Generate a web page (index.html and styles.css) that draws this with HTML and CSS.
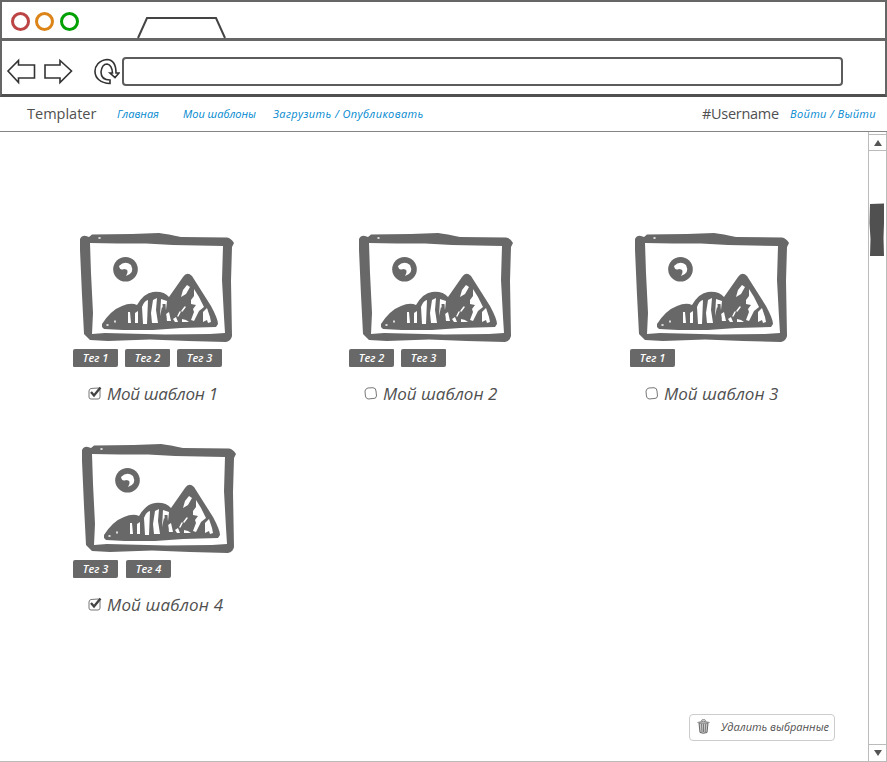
FILE: index.html
```
<!DOCTYPE html>
<html lang="ru">
<head>
<meta charset="utf-8">
<title>Templater</title>
<link rel="stylesheet" href="styles.css">
</head>
<body>
<svg class="defs" width="0" height="0" aria-hidden="true">
  <symbol id="picture" viewBox="0 0 155 110">
    <path fill="#686868" fill-rule="evenodd" d="M0 6Q2 2 6 3L9 4 12 1.500 52 1 79 0Q88 1 101 4L147 4.500Q151 5 154 10L152 14 151 48 152 103Q151 108 146 109L108 108 70 106.500 28 108 10 107 4 101 2 62 0 17ZM10 10 11 40 13 80 12 101 25 100 85 101.500 130 101 145 100 144 84 142 47 143 13 93 12 66 10.500 38 10.500Z"/>
    <circle cx="45.500" cy="36.300" r="12.300" fill="#686868"/>
    <path d="M39 33Q45 27 51 32 55 40 46 43 50 36 44 36 40 38 39 33Z" fill="#fff"/>
    <path fill="#686868" d="M22 94 22 91Q31 77 42 73 51 69 57 72 64 60 73 59 84 58 89 64L103 44Q107 38 112 43L131 73Q138 86 138 91L136 94 101 95 73 97 43 97 24 96Z"/>
    <path fill="#fff" d="M103 57 107 52 110 54 106 61 101 64ZM114 56 119 64 124 74 119 78 114 88 111 87 114 79 113 76 116 72 111 71 111 67 114 63ZM123 79 127 75 130 84 131 89 128 90 127 87 123 89ZM62 74Q64 68 68 67L67 91 63 91ZM73 67 77 65 76 77 78 90 72 90 71 80ZM81 66 87 68 86 77 82 74 80 83ZM86 81 89 79 91 88 87 88ZM93 86 96 84 98 89 95 89ZM102 86 106 87 109 89 102 89ZM48 79 50 79 51 90 48 90ZM55 80 58 78 58 90 55 90Z"/>
    <g fill="none" stroke="#fff" stroke-linecap="round">
      <path stroke-width="1.500" d="M100 79 98 83M105 74 102 78M27 92H28M35 88V89M19 5H20"/>
    </g>
    <path d="M84 71 85 86M103 82 107 76" stroke="#686868" stroke-width="3"/>
  </symbol>
  <symbol id="checked" viewBox="0 0 14 14">
    <path d="M3 2.500 10 2Q12 2 12 4V11Q12 13 10 13H3Q1 13 1 11V5Q1 3 3 2.500Z" fill="none" stroke="#777"/>
    <path d="M3 6 6 9.500 12.500 1.500" fill="none" stroke="#444" stroke-width="2.400"/>
  </symbol>
  <symbol id="unchecked" viewBox="0 0 14 14">
    <path d="M4 2 9 1.700Q12 2 12 5L12.500 10Q12 13 9 12.500L4 13Q1 12 1.300 9L1 5Q2 2 4 2Z" fill="none" stroke="#777"/>
  </symbol>
</svg>

<header class="browser">
  <div class="tabs">
    <i class="light red"></i><i class="light orange"></i><i class="light green"></i>
    <svg class="tab" width="90" height="23" viewBox="0 0 90 23"><path d="M1 22 10 2H79L88 22" fill="#fff" stroke="#444" stroke-width="2"/></svg>
  </div>
  <div class="toolbar">
    <svg width="120" height="32" viewBox="0 0 120 32" fill="#fff" stroke="#333" stroke-width="1.600">
      <path d="M8 15 18.500 4.500V9H34.500V22H18.500V26.500Z"/>
      <path d="M45 9H60V4.500L71.500 15 60 26.500V22H45Z"/>
      <path d="M110 27.500V24Q101 24 101 16 102 8 107 8 112 9 112.500 17H110L115 21.500 119 17H116Q116 4 107 3.500C91 5 90 27 110 27.500Z"/>
    </svg>
    <div class="address"></div>
  </div>
</header>

<nav class="nav">
  <span class="brand">Templater</span>
  <a class="home">Главная</a>
  <a class="mine">Мои шаблоны</a>
  <a class="upload">Загрузить / Опубликовать</a>
  <span class="user">#Username</span>
  <a class="login">Войти / Выйти</a>
</nav>

<div class="page">
  <main class="content">
    <section class="grid">
      <article class="card">
        <svg class="thumb"><use href="#picture"/></svg>
        <div class="tags"><span class="tag">Тег 1</span><span class="tag">Тег 2</span><span class="tag">Тег 3</span></div>
        <div class="name"><svg class="check"><use href="#checked"/></svg><span>Мой шаблон 1</span></div>
      </article>
      <article class="card second">
        <svg class="thumb"><use href="#picture"/></svg>
        <div class="tags"><span class="tag">Тег 2</span><span class="tag">Тег 3</span></div>
        <div class="name"><svg class="check"><use href="#unchecked"/></svg><span>Мой шаблон 2</span></div>
      </article>
      <article class="card third">
        <svg class="thumb"><use href="#picture"/></svg>
        <div class="tags"><span class="tag">Тег 1</span></div>
        <div class="name"><svg class="check"><use href="#unchecked"/></svg><span>Мой шаблон 3</span></div>
      </article>
      <article class="card fourth">
        <svg class="thumb"><use href="#picture"/></svg>
        <div class="tags"><span class="tag">Тег 3</span><span class="tag">Тег 4</span></div>
        <div class="name"><svg class="check"><use href="#checked"/></svg><span>Мой шаблон 4</span></div>
      </article>
    </section>
    <button class="delete">
      <svg width="13" height="15" viewBox="0 0 13 15"><path d="M2 4 3 13.500Q6 15 10 13.500L11 4Z" fill="#ccc" stroke="#666"/><path d="M.5 3.500Q6 1 12.500 3.500M4.500 2 5 .8H8L8.500 2M4.500 5 5 13M6.500 5V13M8.700 5 8.200 13" fill="none" stroke="#666" stroke-width=".8"/></svg>
      <span>Удалить выбранные</span>
    </button>
  </main>
  <aside class="scrollbar">
    <div class="arrow up"><svg width="10" height="6"><path d="M1 6 5 0 9 6Z" fill="#555"/></svg></div>
    <svg class="thumb-bar" width="16" height="54" viewBox="0 0 16 54"><path d="M1 1 15 .5 15 20 14.500 35 15 53 1 53 1.500 36 .5 20Z" fill="#505050"/></svg>
    <div class="arrow down"><svg width="10" height="6"><path d="M1 0H9L5 6Z" fill="#555"/></svg></div>
  </aside>
</div>
</body>
</html>
```
FILE: styles.css
```
* { box-sizing: border-box; }
body {
  margin: 0;
  width: 887px;
  height: 762px;
  overflow: hidden;
  display: flex;
  flex-direction: column;
  background: #fff;
  color: #505050;
  font-family: "Open Sans", "Noto Sans", sans-serif;
}
svg { display: block; flex: none; }
.defs { position: absolute; }

.browser {
  height: 97px;
  flex: none;
  border: solid #666;
  border-width: 2px 2px 3px;
  border-bottom-color: #505050;
}
.tabs {
  height: 39px;
  display: flex;
  align-items: flex-start;
  padding-left: 9px;
  gap: 5.400px;
  border-bottom: 3px solid #666;
}
.light { width: 19px; height: 19px; margin-top: 10px; border: 3px solid; border-radius: 50%; }
.red { border-color: #bd4444; }
.orange { border-color: #dc8418; }
.green { border-color: #00a000; }
.tab { margin: 14px 0 0 53px; }
.toolbar { display: flex; height: 53px; align-items: center; padding-top: 8px; }
.toolbar > svg { margin-left: -2px; }
.address { width: 721px; height: 29px; margin-left: 2px; border: 2px solid #5c5c5c; border-radius: 4px; }

.nav {
  height: 35px;
  flex: none;
  display: flex;
  align-items: center;
  padding-left: 27px;
  border-bottom: 1px solid #858585;
  white-space: nowrap;
  line-height: 20px;
}
.nav a { color: #0088cf; font-size: 11px; font-style: italic; }
.nav span { font-size: 14.500px; }
.nav .brand { width: 90px; }
.nav .home { width: 66px; }
.nav .mine { width: 90px; }
.nav .upload { width: 429px; letter-spacing: 0.400px; }
.nav .user { width: 88px; letter-spacing: -0.300px; }
.nav .login { letter-spacing: 0.350px; }

.page { flex: 1; min-height: 0; display: flex; }
.content { flex: 1; display: flex; flex-direction: column; border-bottom: 1px solid #bbb; }
.grid {
  display: grid;
  grid-template-columns: 276px 281px 230px;
  grid-auto-rows: 211px;
  padding: 101px 0 0 73px;
}
.thumb { width: 155px; height: 110px; margin-left: 7px; }
.second .thumb { margin-left: 10px; }
.third .thumb { margin-left: 5px; }
.fourth .thumb { margin-left: 9px; }
.tags { display: flex; gap: 7px; margin-top: 6px; }
.tag {
  width: 45px;
  height: 18px;
  background: #686868;
  border-radius: 2px 1px 2px 1px;
  color: #fff;
  font-size: 11px;
  font-style: italic;
  font-weight: 600;
  line-height: 17px;
  text-align: center;
}
.fourth .tags { gap: 8px; }
.name {
  display: flex;
  align-items: center;
  gap: 5px;
  margin: 13px 0 0 15px;
  height: 26px;
  font-size: 17px;
  font-style: italic;
  letter-spacing: 0;
  white-space: nowrap;
}
.card:first-child .name { letter-spacing: -0.300px; }
.fourth .name { letter-spacing: 0.150px; }
.check { width: 14px; height: 14px; }

.delete {
  width: 146px;
  height: 27px;
  margin: auto 33px 20px auto;
  padding: 0 0 2px 7px;
  display: flex;
  align-items: center;
  gap: 11px;
  background: #fff;
  border: 1px solid #ccc;
  border-radius: 4px;
  color: #505050;
  font: italic 11px "Open Sans", sans-serif;
  white-space: nowrap;
}
.scrollbar {
  width: 19px;
  flex: none;
  display: flex;
  flex-direction: column;
  border: solid #bbb;
  border-width: 0 1px 1px;
}
.arrow { height: 17px; display: flex; align-items: center; justify-content: center; border: solid #bbb; }
.up { margin-top: 2px; border-width: 1px 0; }
.thumb-bar { margin: 52px 0 0; }
.down { margin-top: auto; border-width: 1px 0 0; }
```
